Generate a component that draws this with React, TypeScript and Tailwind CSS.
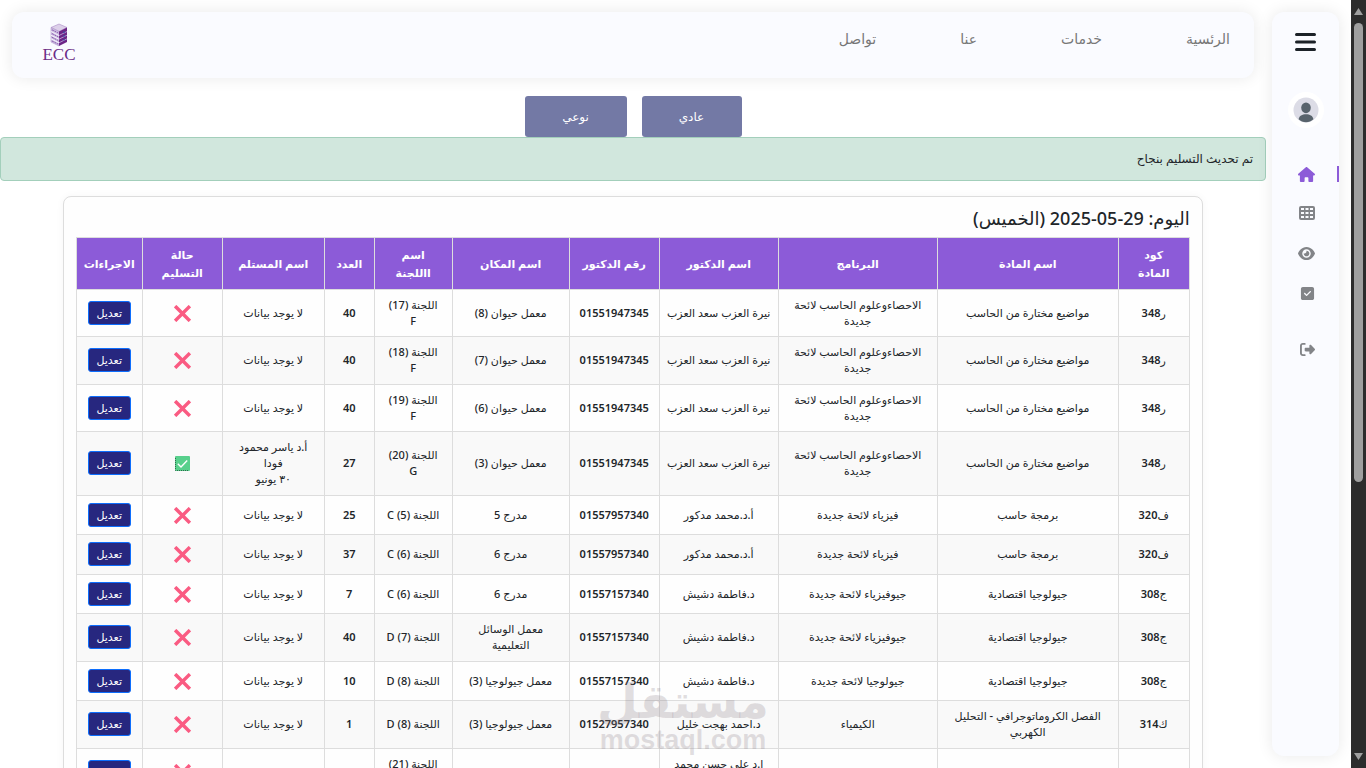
import { FaHouse, FaEye, FaSquareCheck, FaRightFromBracket } from "react-icons/fa6";

type Row = {
  letter: string;
  code: string;
  subject: string;
  program: string;
  doctor: string;
  phone: string;
  place: string;
  committee: string;
  count: string;
  receiver: string;
  delivered: boolean;
};

const NONE = "لا يوجد بيانات";
const STATS = "الاحصاءوعلوم الحاسب لائحة\nجديدة";

const rows: Row[] = [
  { letter: "ر", code: "348", subject: "مواضيع مختارة من الحاسب", program: STATS, doctor: "نيرة العزب سعد العزب", phone: "01551947345", place: "معمل حيوان (8)", committee: "اللجنة (17)\nF", count: "40", receiver: NONE, delivered: false },
  { letter: "ر", code: "348", subject: "مواضيع مختارة من الحاسب", program: STATS, doctor: "نيرة العزب سعد العزب", phone: "01551947345", place: "معمل حيوان (7)", committee: "اللجنة (18)\nF", count: "40", receiver: NONE, delivered: false },
  { letter: "ر", code: "348", subject: "مواضيع مختارة من الحاسب", program: STATS, doctor: "نيرة العزب سعد العزب", phone: "01551947345", place: "معمل حيوان (6)", committee: "اللجنة (19)\nF", count: "40", receiver: NONE, delivered: false },
  { letter: "ر", code: "348", subject: "مواضيع مختارة من الحاسب", program: STATS, doctor: "نيرة العزب سعد العزب", phone: "01551947345", place: "معمل حيوان (3)", committee: "اللجنة (20)\nG", count: "27", receiver: "أ.د ياسر محمود\nفودا\n٣٠ يونيو", delivered: true },
  { letter: "ف", code: "320", subject: "برمجة حاسب", program: "فيزياء لائحة جديدة", doctor: "أ.د.محمد مدكور", phone: "01557957340", place: "مدرج 5", committee: "اللجنة (5) C", count: "25", receiver: NONE, delivered: false },
  { letter: "ف", code: "320", subject: "برمجة حاسب", program: "فيزياء لائحة جديدة", doctor: "أ.د.محمد مدكور", phone: "01557957340", place: "مدرج 6", committee: "اللجنة (6) C", count: "37", receiver: NONE, delivered: false },
  { letter: "ج", code: "308", subject: "جيولوجيا اقتصادية", program: "جيوفيزياء لائحة جديدة", doctor: "د.فاطمة دشيش", phone: "01557157340", place: "مدرج 6", committee: "اللجنة (6) C", count: "7", receiver: NONE, delivered: false },
  { letter: "ج", code: "308", subject: "جيولوجيا اقتصادية", program: "جيوفيزياء لائحة جديدة", doctor: "د.فاطمة دشيش", phone: "01557157340", place: "معمل الوسائل\nالتعليمية", committee: "اللجنة (7) D", count: "40", receiver: NONE, delivered: false },
  { letter: "ج", code: "308", subject: "جيولوجيا اقتصادية", program: "جيولوجيا لائحة جديدة", doctor: "د.فاطمة دشيش", phone: "01557157340", place: "معمل جيولوجيا (3)", committee: "اللجنة (8) D", count: "10", receiver: NONE, delivered: false },
  { letter: "ك", code: "314", subject: "الفصل الكروماتوجرافي - التحليل\nالكهربي", program: "الكيمياء", doctor: "د.احمد بهجت خليل", phone: "01527957340", place: "معمل جيولوجيا (3)", committee: "اللجنة (8) D", count: "1", receiver: NONE, delivered: false },
  { letter: "ف", code: "424", subject: "فيزياء نووية", program: "فيزياء لائحة جديدة", doctor: "ا.د على حسن محمد\nحسن", phone: "01557157340", place: "معمل حيوان (2)", committee: "اللجنة (21)\nG", count: "12", receiver: NONE, delivered: false },
];

const columns = [
  { title: "كود\nالمادة", width: "w-[71px]" },
  { title: "اسم المادة", width: "w-[181px]" },
  { title: "البرنامج", width: "w-[159px]" },
  { title: "اسم الدكتور", width: "w-[119px]" },
  { title: "رقم الدكتور", width: "w-[90px]" },
  { title: "اسم المكان", width: "w-[117px]" },
  { title: "اسم\nااللجنة", width: "w-[78px]" },
  { title: "العدد", width: "w-[50px]" },
  { title: "اسم المستلم", width: "w-[102px]" },
  { title: "حالة\nالتسليم", width: "w-[80px]" },
  { title: "الاجراءات", width: "w-[66px]" },
];

function Logo() {
  return (
    <a href="#home" aria-label="ECC" className="flex w-9 flex-col items-center text-[#6b2c86]">
      <svg width="18" height="24" viewBox="0 0 18 24" aria-hidden="true">
        <path d="M9 1 17 4.500 9 8.500 1 4.500Z" fill="#ddd0ea" stroke="#a98bc4" strokeWidth=".6" />
        <path d="M1 4.500 9 8.500V23L1 19Z" fill="#cdbfe2" stroke="#a98bc4" strokeWidth=".5" />
        <path d="M17 4.500 9 8.500V23l8-4Z" fill="#6d2486" />
        <path d="M9 12.500 17 8.500M9 16.200 17 12.200M9 19.800 17 15.800" fill="none" stroke="#b9a3d8" strokeWidth=".9" />
        <path d="M1 8.500 9 12.500M1 12.200 9 16.200M1 15.800 9 19.800" fill="none" stroke="#f6f2fb" strokeWidth="1" />
        <path d="M2 6.800 8 9.900M2 10.600 8 13.700M2 14.300 8 17.400M2 18 8 21" stroke="#8652a8" strokeWidth=".9" strokeDasharray="2 .8" />
        <path d="M14 8.500v1.600M14 12.200v1.600M14 16v1.600" stroke="#3450a8" strokeWidth="1.400" />
      </svg>
      <span className="font-['Liberation_Serif',serif] text-[17px] leading-4">ECC</span>
    </a>
  );
}

function CrossMark() {
  return (
    <svg width="17" height="17" viewBox="0 0 17 17" role="img" aria-label="لم يتم التسليم" className="mx-auto block">
      <path d="m2.300 2.300 12.400 12.400M14.700 2.300 2.300 14.700" stroke="#fa5b82" strokeWidth="3.400" strokeLinecap="square" />
    </svg>
  );
}

function CheckMark() {
  return (
    <svg width="15" height="15" viewBox="0 0 15 15" role="img" aria-label="تم التسليم" className="mx-auto block">
      <rect width="15" height="15" rx="1" fill="#58d08c" />
      <path d="M.5 2v12.500H14" fill="none" stroke="#31694d" strokeDasharray="1 1" />
      <path d="m2.800 7.800 3.200 3.200 6.200-6.400" fill="none" stroke="#fff" strokeWidth="1.400" />
    </svg>
  );
}

function GridIcon() {
  return (
    <svg width="16" height="14" viewBox="0 0 16 14" aria-hidden="true">
      <rect width="16" height="14" rx="2" fill="#828488" />
      <path d="M2 2h3v2H2zM6.500 2h3v2h-3zM11 2h3v2h-3zM2 6h3v2H2zM6.500 6h3v2h-3zM11 6h3v2h-3zM2 10h3v2H2zM6.500 10h3v2h-3zM11 10h3v2h-3z" fill="#fafbff" />
    </svg>
  );
}

function Sidebar() {
  return (
    <aside className="my-3 ml-1.5 mr-3 flex w-[67px] shrink-0 flex-col items-center rounded-xl bg-[#fafbff] shadow-[0_0_16px_rgba(0,0,0,0.09)]">
      <button type="button" aria-label="القائمة" className="mt-5 flex h-5 w-6 items-center justify-center">
        <svg width="22" height="20" viewBox="0 0 22 20">
          <path d="M1.500 2.500h18M1.500 10h18M1.500 17.500h18" stroke="#1c2228" strokeWidth="3" strokeLinecap="round" />
        </svg>
      </button>
      <div className="mt-10 flex size-9 items-center justify-center rounded-full bg-white">
        <svg width="26" height="26" viewBox="0 0 26 26" role="img" aria-label="الحساب">
          <circle cx="13" cy="13" r="12.500" fill="#dcdce6" />
          <ellipse cx="13" cy="10.800" rx="4.800" ry="5.400" fill="#58636c" />
          <path d="M5.600 22.200c.6-3.600 3.600-5 7.400-5s6.800 1.400 7.400 5c-2 2-4.500 3-7.400 3s-5.400-1-7.400-3Z" fill="#58636c" />
        </svg>
      </div>
      <nav className="mt-9 flex w-full flex-col text-[#828488]">
        <a href="#home" aria-label="الرئيسية" className="flex h-5 items-center justify-end text-[#8c5bd8]">
          <FaHouse size={17} className="mr-[22px]" />
          <span className="h-4 w-0.5 bg-[#8c5bd8]" />
        </a>
        <a href="#table" aria-label="الجدول" className="mt-[19px] flex h-5 items-center justify-end pr-6"><GridIcon /></a>
        <a href="#view" aria-label="عرض" className="mt-5 flex h-5 items-center justify-end pr-6"><FaEye size={17} /></a>
        <a href="#tasks" aria-label="المهام" className="mt-5 flex h-5 items-center justify-end pr-6"><FaSquareCheck size={15} /></a>
        <a href="#logout" aria-label="خروج" className="mt-9 flex h-5 items-center justify-end pr-6"><FaRightFromBracket size={15} /></a>
      </nav>
    </aside>
  );
}

function DeliveryTable() {
  return (
    <table className="w-full table-fixed border-collapse text-center text-[11px] leading-4 text-[#212529]">
      <thead>
        <tr className="h-[52px] bg-[#8c5bd8] text-[11px] leading-[18px] text-white">
          {columns.map((c) => (
            <th key={c.title} scope="col" className={`${c.width} whitespace-pre border border-[#dddddd] p-0 font-bold`}>{c.title}</th>
          ))}
        </tr>
      </thead>
      <tbody className="[&_td]:whitespace-pre [&_td]:border [&_td]:border-[#dddddd] [&_td]:px-0 [&_td]:pt-[7px] [&_td]:pb-[7px]">
        {rows.map((r, i) => (
          <tr key={i} className="bg-[#fefefe] font-medium even:bg-[#f9f9f9] even:[&>td]:pb-2!">
            <td>{r.letter}<span className="font-semibold">{r.code}</span></td>
            <td>{r.subject}</td>
            <td>{r.program}</td>
            <td>{r.doctor}</td>
            <td className="font-semibold">{r.phone}</td>
            <td>{r.place}</td>
            <td>{r.committee}</td>
            <td className="font-semibold">{r.count}</td>
            <td>{r.receiver}</td>
            <td>{r.delivered ? <CheckMark /> : <CrossMark />}</td>
            <td>
              <button type="button" className="mx-auto block h-6 w-[43px] rounded-[3px] border border-[#0d6efd] bg-[#27277f] text-[11px] leading-4 text-white">تعديل</button>
            </td>
          </tr>
        ))}
      </tbody>
    </table>
  );
}

function Scrollbar() {
  return (
    <div aria-hidden="true" className="flex w-[15px] shrink-0 flex-col items-center bg-[#2c2c2c] py-2">
      <svg width="9" height="7" viewBox="0 0 9 7"><path d="M4.500 0 9 7H0Z" fill="#9f9f9f" /></svg>
      <div className="mt-2 h-[61%] w-[9px] rounded-full bg-[#9f9f9f]" />
      <svg width="9" height="7" viewBox="0 0 9 7" className="mt-auto"><path d="M0 0h9L4.500 7Z" fill="#9f9f9f" /></svg>
    </div>
  );
}

export default function App() {
  return (
    <div className="relative flex h-screen overflow-hidden bg-white font-['Noto_Sans','DejaVu_Sans',sans-serif]">
      <main dir="rtl" className="min-w-0 flex-1">
        <header className="m-3 flex h-[66px] items-start justify-between rounded-xl bg-[#fafbff] pl-[29px] pr-6 pt-[11px] shadow-[0_0_16px_rgba(0,0,0,0.09)]">
          <nav className="flex gap-[84px] pt-1 text-sm leading-6 text-[#777777]">
            <a href="#home">الرئسية</a>
            <a href="#services">خدمات</a>
            <a href="#about">عنا</a>
            <a href="#contact">تواصل</a>
          </nav>
          <Logo />
        </header>
        <div className="mt-[18px] flex justify-center gap-[15px] text-xs text-white">
          <button type="button" className="h-[41px] w-[100px] rounded-[3px] bg-[#7379a5]">عادي</button>
          <button type="button" className="h-[41px] w-[102px] rounded-[3px] bg-[#7379a5]">نوعي</button>
        </div>
        <div role="status" className="flex h-11 items-center rounded border border-[#a3cfbb] bg-[#d1e7dd] px-3 text-xs text-[#212529]">
          تم تحديث التسليم بنجاح
        </div>
        <section className="mx-auto mt-[15px] w-9/10 rounded-lg border border-[#dddddd] bg-[#fefefe] px-3 pb-3 pt-[7px] shadow-[0_0_8px_rgba(0,0,0,0.04)]">
          <h1 className="pb-[5px] text-lg leading-7 font-medium text-[#212529]">اليوم: 29-05-2025 (الخميس)</h1>
          <DeliveryTable />
        </section>
      </main>
      <Sidebar />
      <Scrollbar />
      <div aria-hidden="true" className="pointer-events-none absolute bottom-4 left-1/2 flex -translate-x-1/2 flex-col items-center text-[#8c8088]/25">
        <span dir="rtl" className="font-['DejaVu_Sans',sans-serif] text-[47px] leading-[52px] font-bold">مستقل</span>
        <span className="font-['Liberation_Sans',sans-serif] text-[27px] leading-6 font-bold">mostaql.com</span>
      </div>
    </div>
  );
}
